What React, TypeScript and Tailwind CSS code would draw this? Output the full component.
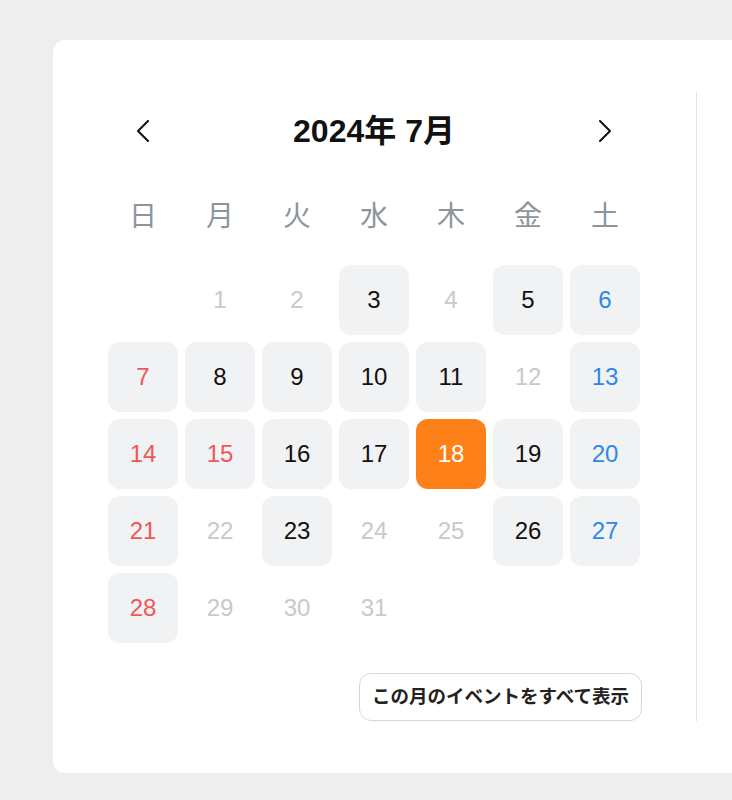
import React from "react";

type Tone = "muted" | "plain" | "sun" | "sat" | "today";

type Day = { n: number; tone: Tone } | null;

const weekdays = ["日", "月", "火", "水", "木", "金", "土"];

// days with an event get a grey tile; the rest are muted
const eventDays = new Set([3, 5, 6, 7, 8, 9, 10, 11, 13, 14, 15, 16, 17, 18, 19, 20, 21, 23, 26, 27, 28]);
const holidays = new Set([15]);
const today = 18;

const buildDays = (): Day[] => {
  const cells: Day[] = [null];
  for (let n = 1; n <= 31; n++) {
    const col = cells.length % 7;
    let tone: Tone = "muted";
    if (n === today) tone = "today";
    else if (eventDays.has(n)) {
      if (col === 0 || holidays.has(n)) tone = "sun";
      else if (col === 6) tone = "sat";
      else tone = "plain";
    }
    cells.push({ n, tone });
  }
  return cells;
};

const toneClass: Record<Tone, string> = {
  muted: "text-[#c6c9ce]",
  plain: "bg-[#f1f2f4] text-[#111111]",
  sun: "bg-[#f1f2f4] text-[#f25555]",
  sat: "bg-[#f1f2f4] text-[#2b8ae6]",
  today: "bg-[#fd8118] text-white",
};

export default function App() {
  const days = buildDays();

  return (
    <div className="h-[800px] w-[732px] overflow-hidden bg-[#eeeeee] pl-[53px] pt-[40px] font-['Liberation_Sans','Noto_Sans_CJK_JP',sans-serif]">
      <div className="flex h-[733px] w-[740px] rounded-[12px] bg-white pl-[55px] pt-[52px]">
        <div className="w-[532px]">
          <div className="grid h-[78px] grid-cols-7 items-center gap-[7px]">
            <button type="button" className="flex items-center justify-center">
              <svg width="12" height="22" viewBox="0 0 12 22" fill="none">
                <polyline points="11,1 1,11 11,21" stroke="#111111" strokeWidth="2" strokeLinecap="round" strokeLinejoin="round" />
              </svg>
            </button>
            <h2 className="col-span-5 text-center text-[32px] font-semibold text-[#111111]">2024年 7月</h2>
            <button type="button" className="flex items-center justify-center">
              <svg width="12" height="22" viewBox="0 0 12 22" fill="none">
                <polyline points="1,1 11,11 1,21" stroke="#111111" strokeWidth="2" strokeLinecap="round" strokeLinejoin="round" />
              </svg>
            </button>
          </div>

          <div className="mt-[23px] grid h-[48px] grid-cols-7 items-center gap-[7px] text-center text-[28px] text-[#8c949c]">
            {weekdays.map((w) => (
              <span key={w}>{w}</span>
            ))}
          </div>

          <div className="mt-[24px] grid grid-cols-7 gap-[7px]">
            {days.map((d, i) =>
              d ? (
                <div
                  key={i}
                  className={`flex h-[70px] items-center justify-center rounded-[12px] text-[24px] ${toneClass[d.tone]}`}
                >
                  {d.n}
                </div>
              ) : (
                <div key={i} className="h-[70px]" />
              ),
            )}
          </div>

          <div className="mt-[30px] flex justify-end">
            <button
              type="button"
              className="-mr-[2px] flex h-[48px] w-[283px] items-center justify-center rounded-[12px] border border-[#d3d7dc] bg-white text-[18.5px] font-bold text-[#222222]"
            >
              この月のイベントをすべて表示
            </button>
          </div>
        </div>

        <div className="ml-[56px] h-[629px] w-px bg-[#dfe3e8]" />
      </div>
    </div>
  );
}
